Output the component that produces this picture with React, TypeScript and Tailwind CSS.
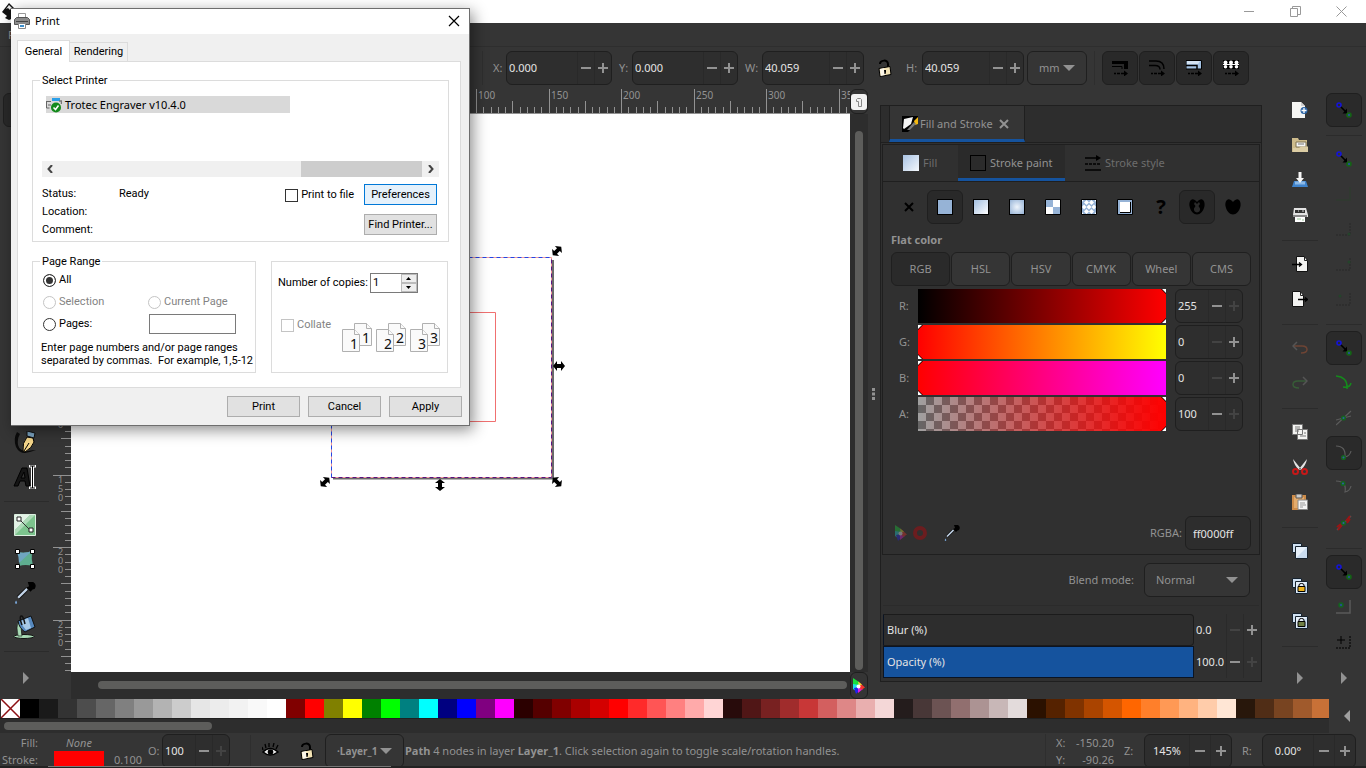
import { useId, type ReactNode } from 'react';
import clsx from 'clsx';

const PALETTE =
  '000000 1a1a1a 333333 4d4d4d 666666 808080 999999 b3b3b3 cccccc e6e6e6 ececec f2f2f2 f9f9f9 ffffff 800000 ff0000 808000 ffff00 008000 00ff00 008080 00ffff 000080 0000ff 800080 ff00ff 2b0000 550000 800000 aa0000 d40000 ff0000 ff2a2a ff5555 ff8080 ffaaaa ffd5d5 280b0b 501616 782121 a02c2c c83737 d35f5f de8787 e9afaf f4d7d7 241c1c 483737 6c5353 916f6f ac9393 c8b7b7 e3dbdb 2b1100 552200 803300 aa4400 d45500 ff6600 ff7f2a ff9955 ffb380 ffccaa ffe6d5 28170b 502d16 784421 a05a2c c87137'.split(
    ' ',
  );

// distance in px between two numbered marks of the rulers
const RULER_STEP = 72.5;

/* ---------- shared controls ---------- */

interface SpinProps {
  label: string;
  value: string;
  width: string;
  hideLabel?: boolean;
  center?: boolean;
  noMinus?: boolean;
  noPlus?: boolean;
  wide?: boolean;
  labelWidth?: string;
}

function Spin({
  label,
  value,
  width,
  hideLabel,
  center,
  noMinus,
  noPlus,
  wide,
  labelWidth,
}: SpinProps) {
  const id = useId();
  const button = clsx(
    'flex h-full shrink-0 items-center justify-center border-l border-[#292929]',
    wide ? 'w-[21px]' : 'w-[17px]',
  );
  return (
    <div className="flex items-center">
      {!hideLabel && (
        <label htmlFor={id} className={labelWidth}>
          {label}
        </label>
      )}
      <div
        className={clsx(
          'flex h-[34px] items-center overflow-hidden rounded-md border border-[#1f1f1f] bg-[#2e2e2e]',
          width,
        )}
      >
        <input
          id={id}
          aria-label={label}
          defaultValue={value}
          className={clsx(
            'min-w-0 flex-1 bg-transparent text-[#e4e4e4] outline-none',
            center ? 'text-center' : 'pl-0.5',
          )}
        />
        <button type="button" aria-label={`Decrease ${label}`} className={button}>
          <Minus off={noMinus} />
        </button>
        <button type="button" aria-label={`Increase ${label}`} className={button}>
          <Plus off={noPlus} />
        </button>
      </div>
    </div>
  );
}

function Minus({ off }: { off?: boolean }) {
  return (
    <svg width="10" height="10" className={off ? 'text-[#434343]' : 'text-[#929292]'}>
      <path d="M0 4h10v2H0z" fill="currentColor" />
    </svg>
  );
}

function Plus({ off }: { off?: boolean }) {
  return (
    <svg width="10" height="10" className={off ? 'text-[#434343]' : 'text-[#929292]'}>
      <path d="M0 4h4V0h2v4h4v2H6v4H4V6H0z" fill="currentColor" />
    </svg>
  );
}

function Dropdown({
  label,
  value,
  className,
  arrow,
}: {
  label: string;
  value: string;
  className: string;
  arrow: string;
}) {
  return (
    <div className="relative flex items-center">
      <select
        aria-label={label}
        className={clsx(
          'h-[34px] appearance-none rounded-md border border-[#1f1f1f] bg-[#353535] text-[#929292]',
          className,
        )}
      >
        <option>{value}</option>
      </select>
      <svg width="12" height="6" className={clsx('pointer-events-none absolute', arrow)}>
        <path d="M0 0h12L6 6z" fill="#929292" />
      </svg>
    </div>
  );
}

function Divider({ className }: { className?: string }) {
  return <div className={clsx('h-px bg-[#2b2b2b]', className)} />;
}

/* ---------- icons ---------- */

function Icon({ size = 16, children }: { size?: number; children: ReactNode }) {
  return (
    <svg width={size} height={size} viewBox="0 0 16 16" fill="none">
      {children}
    </svg>
  );
}

function Lock() {
  return (
    <svg width="14" height="18" viewBox="0 0 14 18" fill="none">
      <path d="M2 5c0-4 8-5 8 0v4" stroke="#000" strokeWidth="2" />
      <path d="M1 9.500l11-2 1 8-11 2z" fill="#f3e3b4" stroke="#000" />
      <path d="M2 10l4-1 1 7-4 1z" fill="#fff" opacity=".7" />
      <path d="M6 11h2v2l-.5 2h-1z" fill="#000" />
    </svg>
  );
}

// dashed arrow under every "scale with object" toggle
function ScaleArrow() {
  return (
    <>
      <path d="M2 13.500h2m1 0h3m1 0h4" stroke="#000" strokeWidth="1.500" />
      <path d="M12 10.500l4 3-4 3z" fill="#000" />
    </>
  );
}

function ScaleStroke() {
  return (
    <Icon>
      <path d="M0 1h16v8h-4V4H0z" fill="#000" />
      <path d="M0 6.500h10V9" stroke="#000" />
      <ScaleArrow />
    </Icon>
  );
}

function ScaleCorners() {
  return (
    <Icon>
      <path d="M0 1h7q8 0 8 8M0 5.500h6q5 0 5 4" stroke="#000" strokeWidth="1.500" />
      <ScaleArrow />
    </Icon>
  );
}

function ScaleGradient() {
  return (
    <Icon>
      <path d="M0 .5h15.500V9H0z" fill="#a3c1e2" stroke="#000" />
      <path d="M1 1h13l-2 3H1z" fill="#d3e2f2" />
      <path d="M0 5.500h11V9" stroke="#000" strokeWidth="1.500" />
      <ScaleArrow />
    </Icon>
  );
}

function ScalePattern() {
  return (
    <Icon>
      <path d="M0 0h16v9H0z" fill="#000" />
      <g fill="#fff">
        <circle cx="2.500" cy="2.500" r="2" />
        <circle cx="8" cy="2.500" r="2" />
        <circle cx="13.500" cy="2.500" r="2" />
        <circle cx="2.500" cy="6.800" r="1.800" />
        <circle cx="8" cy="6.800" r="1.800" />
        <circle cx="13.500" cy="6.800" r="1.800" />
        <path d="M0 4h16v1H0z" />
      </g>
      <ScaleArrow />
    </Icon>
  );
}

function FillStrokeIcon() {
  return (
    <Icon>
      <path d="M0 0h16v6L6 16H0z" fill="#000" />
      <path d="M1 12L2 3l9-2-2 7-7 5z" fill="#f4f4f4" />
      <path d="M12 5l4-4v7l-3 1z" fill="#f5b90f" />
      <path d="M5 14l7-8 2 2-6 6z" fill="#777" />
    </Icon>
  );
}

function GradientSwatch() {
  return <span className="size-4 bg-linear-to-br from-[#a9c3e3] to-[#f4f8fc]" />;
}

function StrokeStyleIcon() {
  return (
    <Icon>
      <path d="M0 3h13M0 9h3m1 0h3m1 0h3m1 0h3M0 15h16" stroke="#000" strokeWidth="1.500" />
      <path d="M11 0l5 3-5 3z" fill="#000" />
    </Icon>
  );
}

const HEART =
  'M8 3C6 1 4.500 0 3 .5 1 1 0 4 .5 7c.8 5 4.500 8.500 7.500 8.500S14.700 12 15.500 7C16 4 15 1 13 .5 11.500 0 10 1 8 3z';

const PAINTS: { name: string; active?: boolean; icon: ReactNode }[] = [
  {
    name: 'No paint',
    icon: (
      <Icon>
        <path d="M4 4l8 8M12 4l-8 8" stroke="#000" strokeWidth="2" />
      </Icon>
    ),
  },
  {
    name: 'Flat color',
    active: true,
    icon: <span className="size-4 border border-black bg-[#96b3d6]" />,
  },
  {
    name: 'Linear gradient',
    icon: <span className="size-4 border border-black bg-linear-to-br from-[#a3bfe0] to-white" />,
  },
  {
    name: 'Radial gradient',
    icon: <span className="size-4 border border-black bg-radial from-[#eef4fb] to-[#96b3d6]" />,
  },
  {
    name: 'Mesh gradient',
    icon: (
      <Icon>
        <path d="M.5.500h15v15H.5z" fill="#96b3d6" stroke="#000" />
        <path d="M8 1h7v7H8zM1 8h7v7H1z" fill="#fff" />
      </Icon>
    ),
  },
  {
    name: 'Pattern',
    icon: (
      <Icon>
        <path d="M.5.500h15v15H.5z" fill="#96b3d6" stroke="#000" />
        <path
          d="M5.500 1L8 3.500 5.500 6 3 3.500zM10.500 1L13 3.500 10.500 6 8 3.500zM3 5.500L5.500 8 3 10.500 1 8zM8 5.500L10.500 8 8 10.500 5.500 8zM13 5.500L15 8l-2 2.500L10.500 8zM5.500 10L8 12.500 5.500 15 3 12.500zM10.500 10l2.500 2.500-2.500 2.500L8 12.500zM1 1h1.500L1 3zM15 1v2l-1.500-2zM1 15v-2l1.500 2zM15 15h-1.500l1.500-2z"
          fill="#fff"
        />
      </Icon>
    ),
  },
  {
    name: 'Swatch',
    icon: (
      <Icon>
        <path d="M.5.500h15v15H.5z" fill="#96b3d6" stroke="#000" />
        <path d="M3 3h10v10H3z" fill="#fff" />
        <path d="M3 13.500h10.500V3" stroke="#000" />
      </Icon>
    ),
  },
  {
    name: 'Unset paint',
    icon: <span className="text-[20px] leading-5 font-bold text-black">?</span>,
  },
  {
    name: 'Fill rule even-odd',
    active: true,
    icon: (
      <Icon>
        <path
          fillRule="evenodd"
          d={`${HEART}M8 5L6 3 5 5l1.500 2L5 9.500Q4.500 13 8 13.500 11.500 13 11 9.500L9.500 7 11 5l-1-2z`}
          fill="#000"
        />
      </Icon>
    ),
  },
  {
    name: 'Fill rule nonzero',
    icon: (
      <Icon>
        <path d={HEART} fill="#000" />
      </Icon>
    ),
  },
];

function SnapArrow() {
  return (
    <Icon>
      <circle cx="3" cy="3" r="2" stroke="#1414d8" strokeWidth="1.600" />
      <path d="M5 5l4.500 4.500" stroke="#000" strokeWidth="1.600" />
      <path d="M11 6.500v5H6.500z" fill="#000" />
      <circle cx="13" cy="13" r="2" fill="#25508a" stroke="#146414" strokeWidth="1.600" />
    </Icon>
  );
}

function Layers({ children }: { children?: ReactNode }) {
  return (
    <Icon>
      <path d="M.5.500h9v9h-9z" fill="#cfe0f1" stroke="#16222e" />
      <path d="M3.500 3.500h12v12h-12z" fill="#c9dcf0" stroke="#16222e" />
      <path d="M4 15V4h11z" fill="#e6f0fa" />
      {children}
    </Icon>
  );
}

function Padlock({ fill }: { fill: string }) {
  return (
    <>
      <path d="M7 9V7q0-1.500 2.500-1.500T12 7v2" stroke="#000" />
      <path d="M6 8.500h7v5H6z" fill={fill} stroke="#000" />
    </>
  );
}

interface Action {
  name: string;
  active?: boolean;
  icon: ReactNode;
}

// null stands for a separator line
const COMMANDS: (null | Action)[] = [
  {
    name: 'New',
    icon: (
      <Icon>
        <path d="M0 0h9l4 4v12H0z" fill="#f5f5f3" />
        <path d="M9 0v4h4z" fill="#cfcfcf" />
        <circle cx="12" cy="8.500" r="3.500" fill="#2a63a5" />
        <path d="M12 6v5M9.500 8.500h5" stroke="#fff" strokeWidth="1.300" />
      </Icon>
    ),
  },
  {
    name: 'Open',
    icon: (
      <Icon>
        <path d="M0 1h6l1 2h8v12H0z" fill="#cdbb8c" />
        <path d="M4 5h10v5H4z" fill="#f6f6f6" stroke="#7e7250" />
        <path d="M6 7h6" stroke="#777" />
        <path d="M1 11h6l2-1.500h7V15H1z" fill="#dccda4" />
      </Icon>
    ),
  },
  {
    name: 'Save',
    icon: (
      <Icon>
        <path d="M2 9h12l2 6H0z" fill="#3f83cc" />
        <path d="M3 9.500h10v3H3z" fill="#8db9e6" />
        <path d="M6.500 0h3v6H12l-4 5-4-5h2.500z" fill="#f6f6f6" />
      </Icon>
    ),
  },
  {
    name: 'Print',
    icon: (
      <Icon>
        <path d="M2 1h12l2 7v2H1V8z" fill="#e3e3e3" />
        <path d="M3 3h10v3H3z" fill="#333" />
        <path d="M6 4h1m3 0h2" stroke="#ddd" />
        <path d="M1 8h14v2H1z" fill="#888" />
        <path d="M3 10h10v5H3z" fill="#fff" />
        <path d="M5 12h4m1 1h2" stroke="#9cc79a" />
      </Icon>
    ),
  },
  null,
  {
    name: 'Import',
    icon: (
      <Icon>
        <path d="M4.500.500h8l3 4v11h-11z" fill="#f3f3f1" stroke="#111" />
        <path d="M12.500.500v4h3z" fill="#fff" stroke="#222" />
        <path d="M0 8.500h9M7 6.500l2.500 2L7 10.500" stroke="#000" strokeWidth="1.300" />
      </Icon>
    ),
  },
  {
    name: 'Export',
    icon: (
      <Icon>
        <path d="M.5.500h8l3 4v11H.5z" fill="#f3f3f1" stroke="#111" />
        <path d="M8.500.500v4h3z" fill="#fff" stroke="#222" />
        <path d="M6 8.500h9M13 6.500l2.500 2-2.500 2" stroke="#000" strokeWidth="1.300" />
      </Icon>
    ),
  },
  null,
  {
    name: 'Undo',
    icon: (
      <Icon>
        <path d="M1 6h9q5 0 5 3.500T9 13" stroke="#6e4434" strokeWidth="1.500" />
        <path d="M5 2L1 6l4 4" stroke="#555" strokeWidth="1.500" />
      </Icon>
    ),
  },
  {
    name: 'Redo',
    icon: (
      <Icon>
        <path d="M15 6H6Q1 6 1 9.500T7 13" stroke="#375c37" strokeWidth="1.500" />
        <path d="M11 2l4 4-4 4" stroke="#555" strokeWidth="1.500" />
      </Icon>
    ),
  },
  null,
  {
    name: 'Copy',
    icon: (
      <Icon>
        <path d="M5.500 5.500h10v10h-10zM.5.500h10v10H.5z" fill="#f4f4f2" stroke="#777" />
        <path d="M3 3h5M3 5h5M3 7h4M12 9h2m-6 3h6" stroke="#777" />
      </Icon>
    ),
  },
  {
    name: 'Cut',
    icon: (
      <Icon>
        <path d="M1 0l8 10-2 1Q2 6 1 0zM15 0L7 10l2 1q5-5 6-11z" fill="#e4e4e4" />
        <circle cx="3.500" cy="12.500" r="2.500" stroke="#c81818" strokeWidth="2" />
        <circle cx="12.500" cy="12.500" r="2.500" stroke="#c81818" strokeWidth="2" />
      </Icon>
    ),
  },
  {
    name: 'Paste',
    icon: (
      <Icon>
        <path d="M0 1h14v15H0z" fill="#cd8b48" />
        <path d="M2 3h10v11H2z" fill="#e3ab6c" />
        <path d="M4 0h6v4H4z" fill="#ccc" stroke="#555" />
        <path d="M6 6h9.500v9.500H6z" fill="#f5f5f5" stroke="#888" />
        <path d="M8 9h5M8 11h6M8 13h3" stroke="#999" />
      </Icon>
    ),
  },
  null,
  { name: 'Duplicate', icon: <Layers /> },
  {
    name: 'Clone',
    icon: (
      <Layers>
        <Padlock fill="#f0b41e" />
      </Layers>
    ),
  },
  {
    name: 'Unlink clone',
    icon: (
      <Layers>
        <Padlock fill="#6f7f45" />
      </Layers>
    ),
  },
  null,
];

function SnapCurve({ d, x, y, red }: { d: string; x: number; y: number; red?: boolean }) {
  return (
    <Icon>
      <path d={d} stroke="#5c5c5c" strokeWidth="1.200" />
      {red && <path d="M2 15l4-5M1 12l4-3M10 6l4-5M11 8l3-4" stroke="#9a1414" strokeWidth="2" />}
      <circle cx={x} cy={y} r="1.800" fill="#2b5fa0" stroke="#14641e" strokeWidth="1.500" />
    </Icon>
  );
}

function Corner({
  color,
  dashed,
  children,
}: {
  color: string;
  dashed?: boolean;
  children?: ReactNode;
}) {
  return (
    <Icon>
      <path
        d="M0 14h14V1"
        stroke={color}
        strokeWidth="1.500"
        strokeDasharray={dashed ? '2 1' : undefined}
      />
      {children}
    </Icon>
  );
}

const SNAPS: (null | Action)[] = [
  { name: 'Enable snapping', active: true, icon: <SnapArrow /> },
  null,
  { name: 'Snap bounding boxes', icon: <SnapArrow /> },
  { name: 'Snap to edges', icon: <Corner color="#2f3b2f" /> },
  {
    name: 'Snap to corners',
    icon: (
      <Corner color="#2c2c2c" dashed>
        <circle cx="13" cy="13" r="1.500" fill="#24442b" />
      </Corner>
    ),
  },
  {
    name: 'Snap to edge midpoints',
    icon: (
      <Corner color="#2c2c2c" dashed>
        <circle cx="13" cy="6" r="1.500" fill="#24442b" />
      </Corner>
    ),
  },
  {
    name: 'Snap to box centers',
    icon: (
      <Corner color="#2c2c2c" dashed>
        <circle cx="4" cy="5" r="1.500" fill="#24442b" />
      </Corner>
    ),
  },
  null,
  { name: 'Snap nodes', active: true, icon: <SnapArrow /> },
  {
    name: 'Snap to paths',
    icon: (
      <Icon>
        <path d="M0 1q12 1 11 13M15 8q-1 5-8 4" stroke="#158a1c" strokeWidth="1.500" />
      </Icon>
    ),
  },
  { name: 'Snap to intersections', icon: <SnapCurve d="M0 15L15 1M0 10l15-4" x={7.5} y={8} /> },
  {
    name: 'Snap to cusp nodes',
    active: true,
    icon: <SnapCurve d="M0 1q10 0 9 11 5-1 6-6" x={7.5} y={12.5} />,
  },
  { name: 'Snap to smooth nodes', icon: <SnapCurve d="M0 1q11 0 9 11 5-1 6-6" x={7} y={3.5} /> },
  { name: 'Snap to midpoints', icon: <SnapCurve d="M1 15L15 1" x={7.5} y={8} red /> },
  null,
  { name: 'Snap other points', active: true, icon: <SnapArrow /> },
  {
    name: 'Snap to object centers',
    icon: (
      <Corner color="#5a5a5a">
        <circle cx="5" cy="6" r="2" fill="#25508a" stroke="#14641e" strokeWidth="1.500" />
      </Corner>
    ),
  },
  {
    name: 'Snap to rotation centers',
    icon: (
      <Corner color="#111" dashed>
        <path d="M5 2v8M1 6h8" stroke="#000" />
      </Corner>
    ),
  },
];

function ColorWheel({ dim }: { dim?: boolean }) {
  return (
    <svg width="14" height="16" viewBox="0 0 14 16" opacity={dim ? 0.35 : 1}>
      <path d="M1 0l6 4v4H1z" fill="#19e03c" />
      <path d="M1 6l6 1-3 6-3-2z" fill="#1fe0e6" />
      <path d="M2 10l5-1v4l-3 3z" fill="#2222ee" />
      <path d="M6 9l3-1 2 3-5 4z" fill="#e01be0" />
      <path d="M7 4l6 5.500L9 12 7 8z" fill="#f5332d" />
      <path d="M6 3.500l4 3L7 8z" fill="#e6e633" />
      <circle cx="6.500" cy="8.500" r="2" fill="#fff" />
    </svg>
  );
}

function Dropper({ size }: { size: number }) {
  return (
    <Icon size={size}>
      <path d="M10 0l1 3-2 1 3 3 1.500-1.500L15 5q2-3-1-5-2-1-4 0z" fill="#000" />
      <path d="M9.500 5L3 11.500" stroke="#111" strokeWidth="3" />
      <path d="M9.500 5L3 11.500" stroke="#c3d5ea" strokeWidth="1.600" />
      <path d="M1.500 13.500Q0 15.500 1.500 16 3 15.500 1.500 13.500z" fill="#79a6d8" />
    </Icon>
  );
}

const TOOLS: (null | Action)[] = [
  {
    name: 'Calligraphy',
    icon: (
      <svg width="24" height="24" viewBox="0 0 24 24" fill="none">
        <path d="M4 1Q0 8 3 16q3 6 9 6 6-1 11-3-4 0-8 1-8 1-10-6Q4 8 7 3z" fill="#0b0b0b" />
        <path d="M14 6l6 1 1 4q-2 6-9 10l-2-1q-1-8 4-14z" fill="#f5d68a" stroke="#000" />
        <path d="M11 20l5-8" stroke="#000" />
        <path d="M14 0l8 2-1 5-7-2z" fill="#7ba3c0" stroke="#111" />
      </svg>
    ),
  },
  {
    name: 'Text',
    icon: (
      <svg width="24" height="24" viewBox="0 0 24 24" fill="none">
        <path d="M1 21L9 3h5l3 18h-4l-1-5H7l-2 5zM8 13h4l-1-6z" fill="#151515" stroke="#000" />
        <path d="M16 1h7M16 23h7M19.500 1v22" stroke="#fff" strokeWidth="3" />
        <path d="M17 1h5M17 23h5M19.500 1v22" stroke="#000" />
      </svg>
    ),
  },
  null,
  {
    name: 'Gradient',
    icon: (
      <svg width="24" height="24" viewBox="0 0 24 24" fill="none">
        <path d="M1.500 1.500h21v21h-21z" fill="#7cc38d" stroke="#dcefe0" />
        <path d="M2 2h15L2 17z" fill="#e4f3e7" />
        <path d="M17 2L2 17v5L22 2z" fill="#aedab8" />
        <path d="M7 7l11 11" stroke="#333" />
        <path d="M4 4h4v4H4zM16 15h4v4h-4z" fill="#fff" stroke="#222" />
      </svg>
    ),
  },
  {
    name: 'Mesh',
    icon: (
      <svg width="24" height="24" viewBox="0 0 24 24" fill="none">
        <path d="M4 5q8 2 15-1-1 8 1 15-8-2-14 0 2-7-2-14z" fill="#5fae90" />
        <path d="M4 5q8 2 15-1L6 16q0-6-2-11z" fill="#6fa5c0" />
        <path
          d="M2.500 2.500h4v4h-4zM17.500 2.500h4v4h-4zM2.500 17.500h4v4h-4zM17.500 17.500h4v4h-4z"
          fill="#fff"
          stroke="#000"
        />
      </svg>
    ),
  },
  { name: 'Dropper', icon: <Dropper size={22} /> },
  {
    name: 'Paint bucket',
    icon: (
      <svg width="24" height="24" viewBox="0 0 24 24" fill="none">
        <ellipse cx="11" cy="21.500" rx="10" ry="2" fill="#a9dcb6" stroke="#111" />
        <path d="M5 7q-2 5 0 14h4q-2-7 1-12z" fill="#a9dcb6" stroke="#111" strokeWidth=".6" />
        <path d="M5 6L18 1l4 11-10 5q-6-4-7-11z" fill="#5688bd" stroke="#111" />
        <path d="M8 6l7-3 3 10-5 2q-4-4-5-9z" fill="#a6c8e6" />
        <path d="M9 10Q6 2 8 1t4 8" stroke="#111" strokeWidth="1.500" />
      </svg>
    ),
  },
  null,
];

function MoreArrow({ className, label }: { className?: string; label: string }) {
  return (
    <button type="button" aria-label={label} className={clsx('flex h-4 items-center', className)}>
      <svg width="7" height="12">
        <path d="M0 0l6 6-6 6z" fill="#929292" />
      </svg>
    </button>
  );
}

/* ---------- window parts ---------- */

function TitleBar() {
  return (
    <header className="flex h-[23px] shrink-0 items-center bg-white text-[#999]">
      <svg width="22" height="22" viewBox="0 0 22 22" className="shrink-0">
        <path d="M9 2l8 8-3 4 2 2-7 3-4-2 2-2-5-4z" fill="#111" />
        <path d="M9 4l4 4-2-1-1 2-2-2-2 1z" fill="#eee" />
      </svg>
      <div className="flex-1" />
      <div className="flex gap-[35px] pr-[19px]">
        <button type="button" aria-label="Minimize">
          <svg width="11" height="11">
            <path d="M0 5.500h10" stroke="currentColor" />
          </svg>
        </button>
        <button type="button" aria-label="Restore">
          <svg width="11" height="11" fill="none">
            <path d="M.5 2.500h7v8h-7zM2.500 2.500v-2h8v8h-3" stroke="currentColor" />
          </svg>
        </button>
        <button type="button" aria-label="Close">
          <svg width="11" height="11">
            <path d="M.5.500l10 10M10.500.500l-10 10" stroke="currentColor" />
          </svg>
        </button>
      </div>
    </header>
  );
}

function ToolControls() {
  const toggle =
    'flex h-[34px] w-9 items-center justify-center rounded-md border border-[#1f1f1f] bg-[#292929]';
  return (
    <div className="flex h-[42px] shrink-0 items-center">
      <div className="h-[34px] w-[483px] border-r border-[#2e2e2e]" />
      <div className="flex items-center gap-[7px] pl-2.5">
        <Spin label="X:" value="0.000" width="w-[106px]" labelWidth="w-[13px]" />
        <Spin label="Y:" value="0.000" width="w-[106px]" labelWidth="w-[13px]" />
        <Spin label="W:" value="40.059" width="w-[102px]" labelWidth="w-[17px]" />
      </div>
      <button type="button" aria-label="Lock width and height" className="ml-[14px] w-7">
        <Lock />
      </button>
      <Spin label="H:" value="40.059" width="w-[102px]" labelWidth="w-4" />
      <div className="w-[3px]" />
      <Dropdown label="Unit" value="mm" className="w-[60px] pl-[11px]" arrow="right-3" />
      <div className="mr-[7px] ml-[7px] h-[34px] w-px bg-[#2e2e2e]" />
      <div className="flex gap-px">
        <button type="button" aria-label="Scale stroke width" className={toggle}>
          <ScaleStroke />
        </button>
        <button type="button" aria-label="Scale rounded corners" className={toggle}>
          <ScaleCorners />
        </button>
        <button type="button" aria-label="Move gradients" className={toggle}>
          <ScaleGradient />
        </button>
        <button type="button" aria-label="Move patterns" className={toggle}>
          <ScalePattern />
        </button>
      </div>
    </div>
  );
}

function Toolbox() {
  return (
    <nav className="flex w-[53px] shrink-0 flex-col items-center justify-between pt-1 pr-1 pb-[13px]">
      <button
        type="button"
        aria-label="Selector"
        className="h-[34px] w-11 rounded-md border border-[#1f1f1f] bg-[#292929]"
      />
      <div className="flex w-full flex-col items-center">
        {TOOLS.map((tool, i) =>
          tool ? (
            <button
              key={i}
              type="button"
              aria-label={tool.name}
              className="flex h-[34px] w-9 items-center justify-center"
            >
              {tool.icon}
            </button>
          ) : (
            <div key={i} className="flex h-[14px] w-full items-center pl-1">
              <Divider className="w-full" />
            </div>
          ),
        )}
        <MoreArrow label="More tools" className="mt-3 pl-1" />
      </div>
    </nav>
  );
}

function HorizontalRuler() {
  const ticks = Array.from({ length: 120 }, (_, i) => i);
  return (
    <svg width="100%" height="25" className="block text-[10px]">
      {ticks.map((i) => {
        const x = Math.round(-30 + (i * RULER_STEP) / 10) + 0.5;
        const top = i % 10 === 0 ? 0 : i % 5 === 0 ? 12 : 18;
        return <path key={i} d={`M${x} ${top}V25`} stroke="#929292" />;
      })}
      {ticks
        .filter((i) => i > 0 && i % 10 === 0)
        .map((i) => (
          <text key={i} x={Math.round(-28 + (i * RULER_STEP) / 10)} y="10" fill="#929292">
            {(i / 10) * 50 - 200}
          </text>
        ))}
      <path d="M0 24.500h2000" stroke="#929292" />
    </svg>
  );
}

function VerticalRuler() {
  const ticks = Array.from({ length: 90 }, (_, i) => i);
  return (
    <svg width="18" height="100%" className="block text-[9px]">
      {ticks.map((i) => {
        const y = Math.round(-2 + (i * RULER_STEP) / 10) + 0.5;
        const left = i % 10 === 0 ? 0 : i % 5 === 0 ? 8 : 12;
        return <path key={i} d={`M${left} ${y}H18`} stroke="#929292" />;
      })}
      {[4, 5, 6, 7].map((n) => {
        const y = Math.round(-3 + n * RULER_STEP);
        return [...String(n * 50 - 100)].map((c, k) => (
          <text key={`${n}${k}`} x="5" y={y + 9 + k * 9} fill="#929292">
            {c}
          </text>
        ));
      })}
    </svg>
  );
}

function Handle({ x, y, turn }: { x: number; y: number; turn: number }) {
  return (
    <path
      d="M-6 0l4-5v3h4v-3l4 5-4 5V2h-4v3z"
      fill="#000"
      transform={`translate(${x} ${y}) rotate(${turn})`}
    />
  );
}

function Drawing() {
  return (
    <svg width="100%" height="100%" fill="none" className="block">
      <path d="M262 364.500h220V146" stroke="#6a6a6a" strokeWidth="2" />
      <path d="M260.500 143.500h220v220h-220z" stroke="#f39a9a" />
      <path d="M260.500 363.500V143.500h220" stroke="#2446e6" strokeDasharray="4 3" />
      <path d="M260.500 363.500h220V143.500" stroke="#5a1480" strokeDasharray="4 3" />
      <path d="M314.500 198.500h110v109h-110z" stroke="#f07070" />
      <Handle x={486} y={137} turn={-45} />
      <Handle x={488} y={252} turn={0} />
      <Handle x={486} y={368} turn={45} />
      <Handle x={369} y={371} turn={90} />
      <Handle x={254} y={368} turn={-45} />
    </svg>
  );
}

function CanvasArea() {
  return (
    <main className="flex min-w-0 flex-1 flex-col">
      <div className="flex min-h-0 flex-1">
        <div className="flex w-[18px] shrink-0 flex-col pt-[25px]">
          <div className="min-h-0 flex-1 overflow-hidden">
            <VerticalRuler />
          </div>
        </div>
        <div className="flex min-w-0 flex-1 flex-col">
          <HorizontalRuler />
          <div className="min-h-0 flex-1 bg-white">
            <Drawing />
          </div>
        </div>
        <div className="flex w-[18px] shrink-0 flex-col items-center">
          <button
            type="button"
            aria-label="Toggle guides lock"
            className="flex h-[25px] w-full items-center justify-center rounded-md border border-[#1f1f1f] bg-[#353535]"
          >
            <svg width="16" height="16" fill="none">
              <rect width="16" height="16" rx="3" fill="#f2f2f2" />
              <path d="M5.500 7.500v-2l1-1h3l1 1v7h-3v-5z" stroke="#888" />
            </svg>
          </button>
          <div className="flex w-full flex-1 justify-center bg-[#2d2d2d] pt-[17px] pb-[2px]">
            <div className="w-2 rounded-full bg-[#5d5d5b]" />
          </div>
        </div>
      </div>
      <div className="flex h-[27px] shrink-0 pl-[18px]">
        <div className="flex flex-1 items-center bg-[#2d2d2d] pr-[3px] pb-px pl-[27px]">
          <div className="h-2 flex-1 rounded-full bg-[#5d5d5b]" />
        </div>
        <button
          type="button"
          aria-label="Color managed view"
          className="flex w-[18px] items-center justify-center rounded-md border border-[#1f1f1f] bg-[#353535]"
        >
          <ColorWheel />
        </button>
      </div>
    </main>
  );
}

const CHANNELS = [
  { label: 'R:', value: '255', end: true, track: 'bg-linear-to-r/srgb from-black to-[#f00]' },
  { label: 'G:', value: '0', end: false, track: 'bg-linear-to-r/srgb from-[#f00] to-[#ff0]' },
  { label: 'B:', value: '0', end: false, track: 'bg-linear-to-r/srgb from-[#f00] to-[#f0f]' },
  {
    label: 'A:',
    value: '100',
    end: true,
    track:
      'bg-[linear-gradient(to_right,transparent,#f00),repeating-conic-gradient(#666_0_25%,#a0a0a0_0_50%)] bg-[length:100%_100%,16px_16px]',
  },
];

function Channel({ label, value, end, track }: (typeof CHANNELS)[number]) {
  const id = useId();
  return (
    <div className="flex h-9 items-center">
      <label htmlFor={id} className="w-[27px] pl-2">
        {label}
      </label>
      <div className="relative flex h-[34px] flex-1">
        <input
          id={id}
          type="range"
          max={label === 'A:' ? 100 : 255}
          defaultValue={value}
          className={clsx(
            'h-full w-full appearance-none [&::-webkit-slider-thumb]:appearance-none',
            track,
          )}
        />
        <svg
          width="5"
          height="34"
          className={clsx(
            'pointer-events-none absolute top-0',
            end ? 'right-0 -scale-x-100' : 'left-0',
          )}
        >
          <path d="M0 0h5L0 5zM0 34h5l-5-5z" fill="#000" />
          <path d="M0 0h4L0 4zM0 34h4l-4-4z" fill="#fff" />
        </svg>
      </div>
      <div className="w-[9px]" />
      <Spin label={label} value={value} width="w-[68px]" hideLabel noMinus={!end} noPlus={end} />
    </div>
  );
}

function PercentSlider({ label, value, full }: { label: string; value: string; full?: boolean }) {
  const id = useId();
  const button = 'flex h-full w-[17px] items-center justify-center border-l border-[#2a2a2a]';
  return (
    <div className="flex h-8 items-center">
      <div className="relative flex h-full flex-1 items-center">
        <input
          id={id}
          type="range"
          defaultValue={full ? 100 : 0}
          className={clsx(
            'h-full w-full appearance-none border [&::-webkit-slider-thumb]:appearance-none',
            full
              ? 'border-[#0a1424] bg-[#15539e]'
              : 'rounded-r border-[#1b1b1b] border-l-[#0a1424] bg-[#2d2d2d]',
          )}
        />
        <label htmlFor={id} className="pointer-events-none absolute left-1 text-[#e4e4e4]">
          {label}
        </label>
      </div>
      <input
        aria-label={`${label} value`}
        defaultValue={value}
        className="w-8 bg-transparent pl-0.5 text-[#e4e4e4]"
      />
      <button type="button" aria-label={`Decrease ${label}`} className={button}>
        <Minus off={!full} />
      </button>
      <button type="button" aria-label={`Increase ${label}`} className={button}>
        <Plus off={full} />
      </button>
    </div>
  );
}

function FillStrokePanel() {
  return (
    <aside className="mt-4 mb-[17px] flex w-[382px] shrink-0 flex-col border border-[#1f1f1f] bg-[#303030]">
      <div className="flex h-[37px] shrink-0 border-b border-[#1f1f1f] bg-[#2d2d2d] pl-2">
        <div className="flex w-[136px] items-center border-x border-b-[3px] border-x-[#1f1f1f] border-b-[#15539e] bg-[#353535] pt-0.5 pl-3">
          <FillStrokeIcon />
          <span className="ml-0.5 flex-1">Fill and Stroke</span>
          <button type="button" aria-label="Close tab" className="mr-[15px]">
            <svg width="10" height="10">
              <path d="M1 1l8 8M9 1L1 9" stroke="#929292" strokeWidth="2" />
            </svg>
          </button>
        </div>
      </div>
      <section className="mx-px mt-px flex min-h-0 flex-1 flex-col border border-[#1f1f1f]">
        <div role="tablist" className="flex h-[37px] shrink-0 border-b border-[#1f1f1f]">
          <button
            type="button"
            role="tab"
            className="flex w-[75px] items-center gap-1 pl-5 text-[#6d6d6d]"
          >
            <GradientSwatch />
            Fill
          </button>
          <button
            type="button"
            role="tab"
            aria-selected="true"
            className="flex w-[107px] items-center gap-1 border-b-[3px] border-[#15539e] bg-[#2a2a2a] pt-[3px] pl-3"
          >
            <span className="size-4 border border-black bg-[#2b2b2b]" />
            Stroke paint
          </button>
          <button
            type="button"
            role="tab"
            className="flex items-center gap-1 pl-5 text-[#6d6d6d]"
          >
            <StrokeStyleIcon />
            Stroke style
          </button>
        </div>
        <div className="flex pt-2 pl-2">
          {PAINTS.map((paint) => (
            <button
              key={paint.name}
              type="button"
              aria-label={paint.name}
              className={clsx(
                'flex h-[34px] w-9 items-center justify-center rounded-md border',
                paint.active ? 'border-[#1f1f1f] bg-[#292929]' : 'border-transparent',
              )}
            >
              {paint.icon}
            </button>
          ))}
        </div>
        <div className="px-2 pt-2">
          <h2 className="leading-4 font-bold">Flat color</h2>
          <div className="mt-1 flex gap-px">
            {['RGB', 'HSL', 'HSV', 'CMYK', 'Wheel', 'CMS'].map((mode, i) => (
              <button
                key={mode}
                type="button"
                className={clsx(
                  'h-[34px] flex-1 rounded-md border border-[#1f1f1f]',
                  i === 0 ? 'bg-[#2a2a2a]' : 'bg-[#353535]',
                )}
              >
                {mode}
              </button>
            ))}
          </div>
          <div className="mt-0.5 pr-2">
            {CHANNELS.map((channel) => (
              <Channel key={channel.label} {...channel} />
            ))}
          </div>
        </div>
        <div className="flex-1" />
        <div className="flex items-center px-2 pb-1">
          <div className="flex flex-1 items-center gap-1 pl-[3px]">
            <ColorWheel dim />
            <Icon>
              <circle cx="8" cy="8" r="5" stroke="#6b1d1f" strokeWidth="4" />
            </Icon>
            <div className="w-2" />
            <Dropper size={16} />
          </div>
          <label htmlFor="rgba" className="mr-[3px]">
            RGBA:
          </label>
          <input
            id="rgba"
            defaultValue="ff0000ff"
            className="h-[34px] w-[66px] rounded-md border border-[#1f1f1f] bg-[#2d2d2d] pl-[7px] text-[#e4e4e4]"
          />
        </div>
      </section>
      <div className="flex items-center justify-end pt-2 pr-[11px] pb-2">
        <span className="mr-2.5">Blend mode:</span>
        <Dropdown
          label="Blend mode"
          value="Normal"
          className="w-[106px] pl-[11px]"
          arrow="right-3"
        />
      </div>
      <Divider className="mx-0.5 mb-2" />
      <div className="pr-px pb-[3px] pl-0.5">
        <PercentSlider label="Blur (%)" value="0.0" />
        <PercentSlider label="Opacity (%)" value="100.0" full />
      </div>
    </aside>
  );
}

function IconColumn({ items, label }: { items: (null | Action)[]; label: string }) {
  return (
    <nav className="flex w-9 shrink-0 flex-col items-center pt-1 pb-[13px]">
      {items.map((item, i) =>
        item ? (
          <div key={i} className="h-[35px]">
            <button
              type="button"
              aria-label={item.name}
              className={clsx(
                'flex h-[34px] w-9 items-center justify-center rounded-md border',
                item.active ? 'border-[#1f1f1f] bg-[#2a2a2a]' : 'border-transparent',
              )}
            >
              {item.icon}
            </button>
          </div>
        ) : (
          <div key={i} className="flex h-[14px] items-center">
            <Divider className="w-9" />
          </div>
        ),
      )}
      <div className="flex-1" />
      <MoreArrow label={label} />
    </nav>
  );
}

function Palette() {
  return (
    <div className="flex h-[34px] shrink-0">
      <div className="flex min-w-0 flex-1 flex-col bg-[#2d2d2d]">
        <div className="flex h-[19px] overflow-hidden pl-px">
          <button type="button" aria-label="No color" className="shrink-0">
            <svg width="19" height="19" className="bg-white">
              <path d="M0 0l19 19M19 0L0 19" stroke="#8c1014" strokeWidth="1.500" />
            </svg>
          </button>
          {PALETTE.map((color, i) => (
            <button
              key={i}
              type="button"
              aria-label={`#${color}`}
              className="w-[19px] shrink-0"
              style={{ background: `#${color}` }}
            />
          ))}
        </div>
        <div className="flex flex-1 items-center border-t border-[#202020] px-1">
          <div className="h-2 w-[208px] rounded-full bg-[#5d5d5b]" />
        </div>
      </div>
      <button type="button" aria-label="Palette menu" className="w-[37px] pl-[15px]">
        <svg width="6" height="12">
          <path d="M6 0L0 6l6 6z" fill="#a0a0a0" />
        </svg>
      </button>
    </div>
  );
}

function StatusBar() {
  return (
    <footer className="shrink-0">
      <div className="flex h-[33px] items-center overflow-hidden pt-0.5">
        <div className="grid w-[148px] shrink-0 grid-cols-[38px_82px_28px] leading-[17px]">
          <span className="text-right">Fill:</span>
          <span className="text-center italic">None</span>
          <span />
          <span className="text-right">Stroke:</span>
          <span className="mx-4 bg-[#f00]" />
          <span className="-ml-1.5">0.100</span>
        </div>
        <Spin label="O:" value="100" width="w-[68px]" labelWidth="w-[14px]" noPlus />
        <div className="ml-5 h-full w-px bg-[#2e2e2e]" />
        <button type="button" aria-label="Layer visible" className="ml-[11px]">
          <svg width="17" height="16" viewBox="0 0 17 16" fill="none">
            <path d="M1 9q7-7 15 0-8 6-15 0z" fill="#eee" stroke="#000" strokeWidth="1.500" />
            <circle cx="8.500" cy="9" r="2.800" fill="#000" />
            <path
              d="M1 7L0 4m4 1L3 1m4 3V0m4 4l1-4m2 6l2-4"
              stroke="#000"
              strokeWidth="1.300"
            />
          </svg>
        </button>
        <button type="button" aria-label="Layer unlocked" className="mr-[11px] ml-[21px]">
          <Lock />
        </button>
        <Dropdown
          label="Current layer"
          value="·Layer_1"
          className="w-[79px] pl-[11px] text-[10px] font-bold"
          arrow="right-3"
        />
        <p className="min-w-0 flex-1 truncate pl-px">
          <b>Path</b> 4 nodes in layer <b>Layer_1</b>. Click selection again to toggle
          scale/rotation handles.
        </p>
        <div className="grid w-[79px] grid-cols-[20px_38px] border-l border-[#2e2e2e] pl-2.5 leading-[17px]">
          <span>X:</span>
          <span className="text-right">-150.20</span>
          <span>Y:</span>
          <span className="text-right">-90.26</span>
        </div>
        <Spin label="Z:" value="145%" width="w-[88px]" labelWidth="w-5" center wide />
        <div className="w-[10px]" />
        <Spin label="R:" value="0.00°" width="w-[94px]" labelWidth="w-5" center wide />
        <div className="w-[10px]" />
      </div>
      <div className="h-0.5 bg-[#222] pr-[975px] pl-12">
        <div className="h-px bg-[#777]" />
      </div>
    </footer>
  );
}

/* ---------- print dialog ---------- */

interface RadioProps {
  label: string;
  checked?: boolean;
  disabled?: boolean;
}

function Radio({ label, checked, disabled }: RadioProps) {
  return (
    <label className={clsx('flex items-center gap-[3px]', disabled && 'text-[#838383]')}>
      <input
        type="radio"
        name="range"
        defaultChecked={checked}
        disabled={disabled}
        className="size-[13px] appearance-none rounded-full border border-[#333] bg-white checked:bg-[#333] checked:shadow-[inset_0_0_0_2px_white] disabled:border-[#c4c4c4]"
      />
      {label}
    </label>
  );
}

function Check({ label, disabled }: { label: string; disabled?: boolean }) {
  return (
    <label className={clsx('flex items-center gap-[3px]', disabled && 'text-[#838383]')}>
      <input
        type="checkbox"
        disabled={disabled}
        className="size-[13px] appearance-none border border-[#333] bg-white disabled:border-[#c4c4c4]"
      />
      {label}
    </label>
  );
}

function DialogButton({ children, primary }: { children: ReactNode; primary?: boolean }) {
  return (
    <button
      type="button"
      className={clsx(
        'h-[21px] w-[73px] border',
        primary ? 'border-[#0078d7] bg-[#e5f1fb]' : 'border-[#adadad] bg-[#e1e1e1]',
      )}
    >
      {children}
    </button>
  );
}

function CollatePages({ digit }: { digit: string }) {
  return (
    <svg width="32" height="32" className="font-['Noto_Sans'] text-[14px]">
      <g fill="#fafafa" stroke="#b0b0b0">
        <path d="M12.500 1.500h12l5 5v17h-17z" />
        <path d="M24.500 1.500v5h5M.5 7.500h12l5 5v17H.5z" />
        <path d="M12.500 7.500v5h5" />
      </g>
      <text x="20" y="21" fill="#111">
        {digit}
      </text>
      <text x="8" y="27" fill="#111">
        {digit}
      </text>
    </svg>
  );
}

function PrinterIcon() {
  return (
    <Icon>
      <path d="M4.500.500h7v6h-7z" fill="#fff" stroke="#999" />
      <path d="M.5 6.500l2-2h11l2 2v5H.5z" fill="#8b8b8b" stroke="#555" />
      <path d="M2 8.500h12" stroke="#444" />
      <path d="M4.500 10.500h7v5h-7z" fill="#fff" stroke="#888" />
      <path d="M6 12h4v2H6z" fill="#3c8ecb" />
    </Icon>
  );
}

function PrintDialog() {
  const box = 'border border-[#dcdcdc]';
  return (
    <div
      role="dialog"
      aria-label="Print"
      className="absolute top-2 left-[11px] flex h-[418px] w-[459px] flex-col border border-l-0 border-[#6e6e6e] bg-[#f0f0f0] font-['Roboto','Liberation_Sans',sans-serif] text-[11px] text-black shadow-[3px_4px_14px_rgba(0,0,0,0.45)]"
    >
      <div className="flex h-[25px] shrink-0 items-center gap-[5px] bg-white pr-[9px] pb-0.5 pl-[3px] font-['Noto_Sans']">
        <PrinterIcon />
        <h1 className="flex-1">Print</h1>
        <button type="button" aria-label="Close dialog">
          <svg width="12" height="12">
            <path d="M1 1l10 10M11 1L1 11" stroke="#000" strokeWidth="1.200" />
          </svg>
        </button>
      </div>
      <div role="tablist" className="flex items-end px-1.5 pt-1.5">
        <button
          type="button"
          role="tab"
          aria-selected="true"
          className="relative -mb-px h-[22px] w-[53px] border border-b-0 border-[#dcdcdc] bg-white"
        >
          General
        </button>
        <button
          type="button"
          role="tab"
          className="h-[19px] w-[58px] border border-b-0 border-l-0 border-[#dcdcdc]"
        >
          Rendering
        </button>
      </div>
      <div
        className={clsx(
          'mr-2 ml-1.5 flex h-[327px] flex-col bg-white pt-3 pr-[11px] pl-3.5',
          box,
        )}
      >
        <fieldset className={clsx('h-[168px] px-[9px]', box)}>
          <legend className="-ml-0.5 px-0.5 leading-[13px]">Select Printer</legend>
          <div className="mt-[9px] ml-1 flex h-[17px] w-[244px] items-center gap-[3px] bg-[#d9d9d9] font-['Noto_Sans']">
            <svg width="16" height="16" fill="none">
              <path d="M0 4.500h5M.5 5v6h3M2 8h3" stroke="#666" />
              <path d="M6 2.500h8" stroke="#2a9fe8" strokeWidth="3" />
              <path d="M13 4h2.500v3" stroke="#777" strokeWidth="1.500" />
              <circle cx="10" cy="10.500" r="5" fill="#148a1c" />
              <path d="M7.500 10.500l2 2 3-4" stroke="#fff" strokeWidth="1.500" />
            </svg>
            Trotec Engraver v10.4.0
          </div>
          <div className="mt-12 flex h-4 items-center bg-[#f0f0f0] px-[5px] text-[#444]">
            <svg width="6" height="8" fill="none">
              <path d="M5 0L1.500 4 5 8" stroke="currentColor" strokeWidth="2" />
            </svg>
            <div className="flex-1" />
            <div className="mr-[6px] h-full w-[121px] bg-[#cdcdcd]" />
            <svg width="6" height="8" fill="none">
              <path d="M1 0l3.500 4L1 8" stroke="currentColor" strokeWidth="2" />
            </svg>
          </div>
          <div className="mt-1.5 flex pr-0.5">
            <dl className="mt-0.5 grid flex-1 grid-cols-[77px_1fr] content-start leading-[18px]">
              <dt>Status:</dt>
              <dd>Ready</dd>
              <dt>Location:</dt>
              <dd />
              <dt>Comment:</dt>
              <dd />
            </dl>
            <div className="mr-2.5 flex h-6 items-center">
              <Check label="Print to file" />
            </div>
            <div className="mt-px flex flex-col gap-[9px]">
              <DialogButton primary>Preferences</DialogButton>
              <DialogButton>Find Printer...</DialogButton>
            </div>
          </div>
        </fieldset>
        <div className="mt-[13px] flex items-end justify-between pr-px">
          <fieldset className={clsx('h-[118px] w-[224px] min-w-0 pr-0 pl-[9px]', box)}>
            <legend className="-ml-0.5 px-0.5 leading-[13px]">Page Range</legend>
            <div className="mt-1 ml-px">
              <Radio label="All" checked />
            </div>
            <div className="mt-1.5 ml-px grid grid-cols-[105px_1fr]">
              <Radio label="Selection" disabled />
              <Radio label="Current Page" disabled />
            </div>
            <div className="mt-1 ml-px grid grid-cols-[106px_1fr] items-center">
              <Radio label="Pages:" />
              <input
                aria-label="Page list"
                className="h-5 w-[87px] border border-[#7a7a7a] bg-white px-1"
              />
            </div>
            <p className="mt-[7px] -ml-px leading-[13px] whitespace-pre">
              {'Enter page numbers and/or page ranges\nseparated by commas.  For example, 1,5-12'}
            </p>
          </fieldset>
          <div className={clsx('h-[112px] w-[177px] pt-[11px] pl-1.5', box)}>
            <div className="flex items-center gap-0.5">
              <label htmlFor="copies">Number of copies:</label>
              <div className="flex h-5 w-12 border border-[#7a7a7a] bg-white">
                <input id="copies" defaultValue="1" className="min-w-0 flex-1 pl-0.5" />
                <div className="grid w-4 grid-rows-2">
                  <button
                    type="button"
                    aria-label="More copies"
                    className="flex items-center justify-center border border-[#bbb] bg-[#eee]"
                  >
                    <svg width="5" height="3">
                      <path d="M0 3h5L2.500 0z" />
                    </svg>
                  </button>
                  <button
                    type="button"
                    aria-label="Fewer copies"
                    className="flex items-center justify-center border border-[#bbb] bg-[#eee]"
                  >
                    <svg width="5" height="3">
                      <path d="M0 0h5L2.500 3z" />
                    </svg>
                  </button>
                </div>
              </div>
            </div>
            <div className="mt-6 flex items-start pl-[3px]">
              <div className="w-[61px]">
                <Check label="Collate" disabled />
              </div>
              <div className="flex gap-0.5 pt-[5px]">
                <CollatePages digit="1" />
                <CollatePages digit="2" />
                <CollatePages digit="3" />
              </div>
            </div>
          </div>
        </div>
      </div>
      <div className="mt-2 flex justify-end gap-2 pr-[7px]">
        <DialogButton>Print</DialogButton>
        <DialogButton>Cancel</DialogButton>
        <DialogButton>Apply</DialogButton>
      </div>
    </div>
  );
}

export default function App() {
  return (
    <div className="relative flex h-screen flex-col overflow-hidden bg-[#353535] font-['Noto_Sans','Open_Sans',sans-serif] text-[11px] leading-4 text-[#929292]">
      <TitleBar />
      <div className="flex h-6 shrink-0 items-center border-b border-[#2e2e2e] px-2">File</div>
      <ToolControls />
      <div className="flex min-h-0 flex-1">
        <Toolbox />
        <CanvasArea />
        <div className="flex w-3 shrink-0 items-center justify-center">
          <svg width="4" height="12">
            <path d="M0 0h3v3H0zM0 4.500h3v3H0zM0 9h3v3H0z" fill="#929292" />
          </svg>
        </div>
        <FillStrokePanel />
        <div className="flex gap-2 pr-1 pl-5">
          <IconColumn items={COMMANDS} label="More commands" />
          <IconColumn items={SNAPS} label="More snapping" />
        </div>
      </div>
      <Palette />
      <StatusBar />
      <PrintDialog />
    </div>
  );
}
